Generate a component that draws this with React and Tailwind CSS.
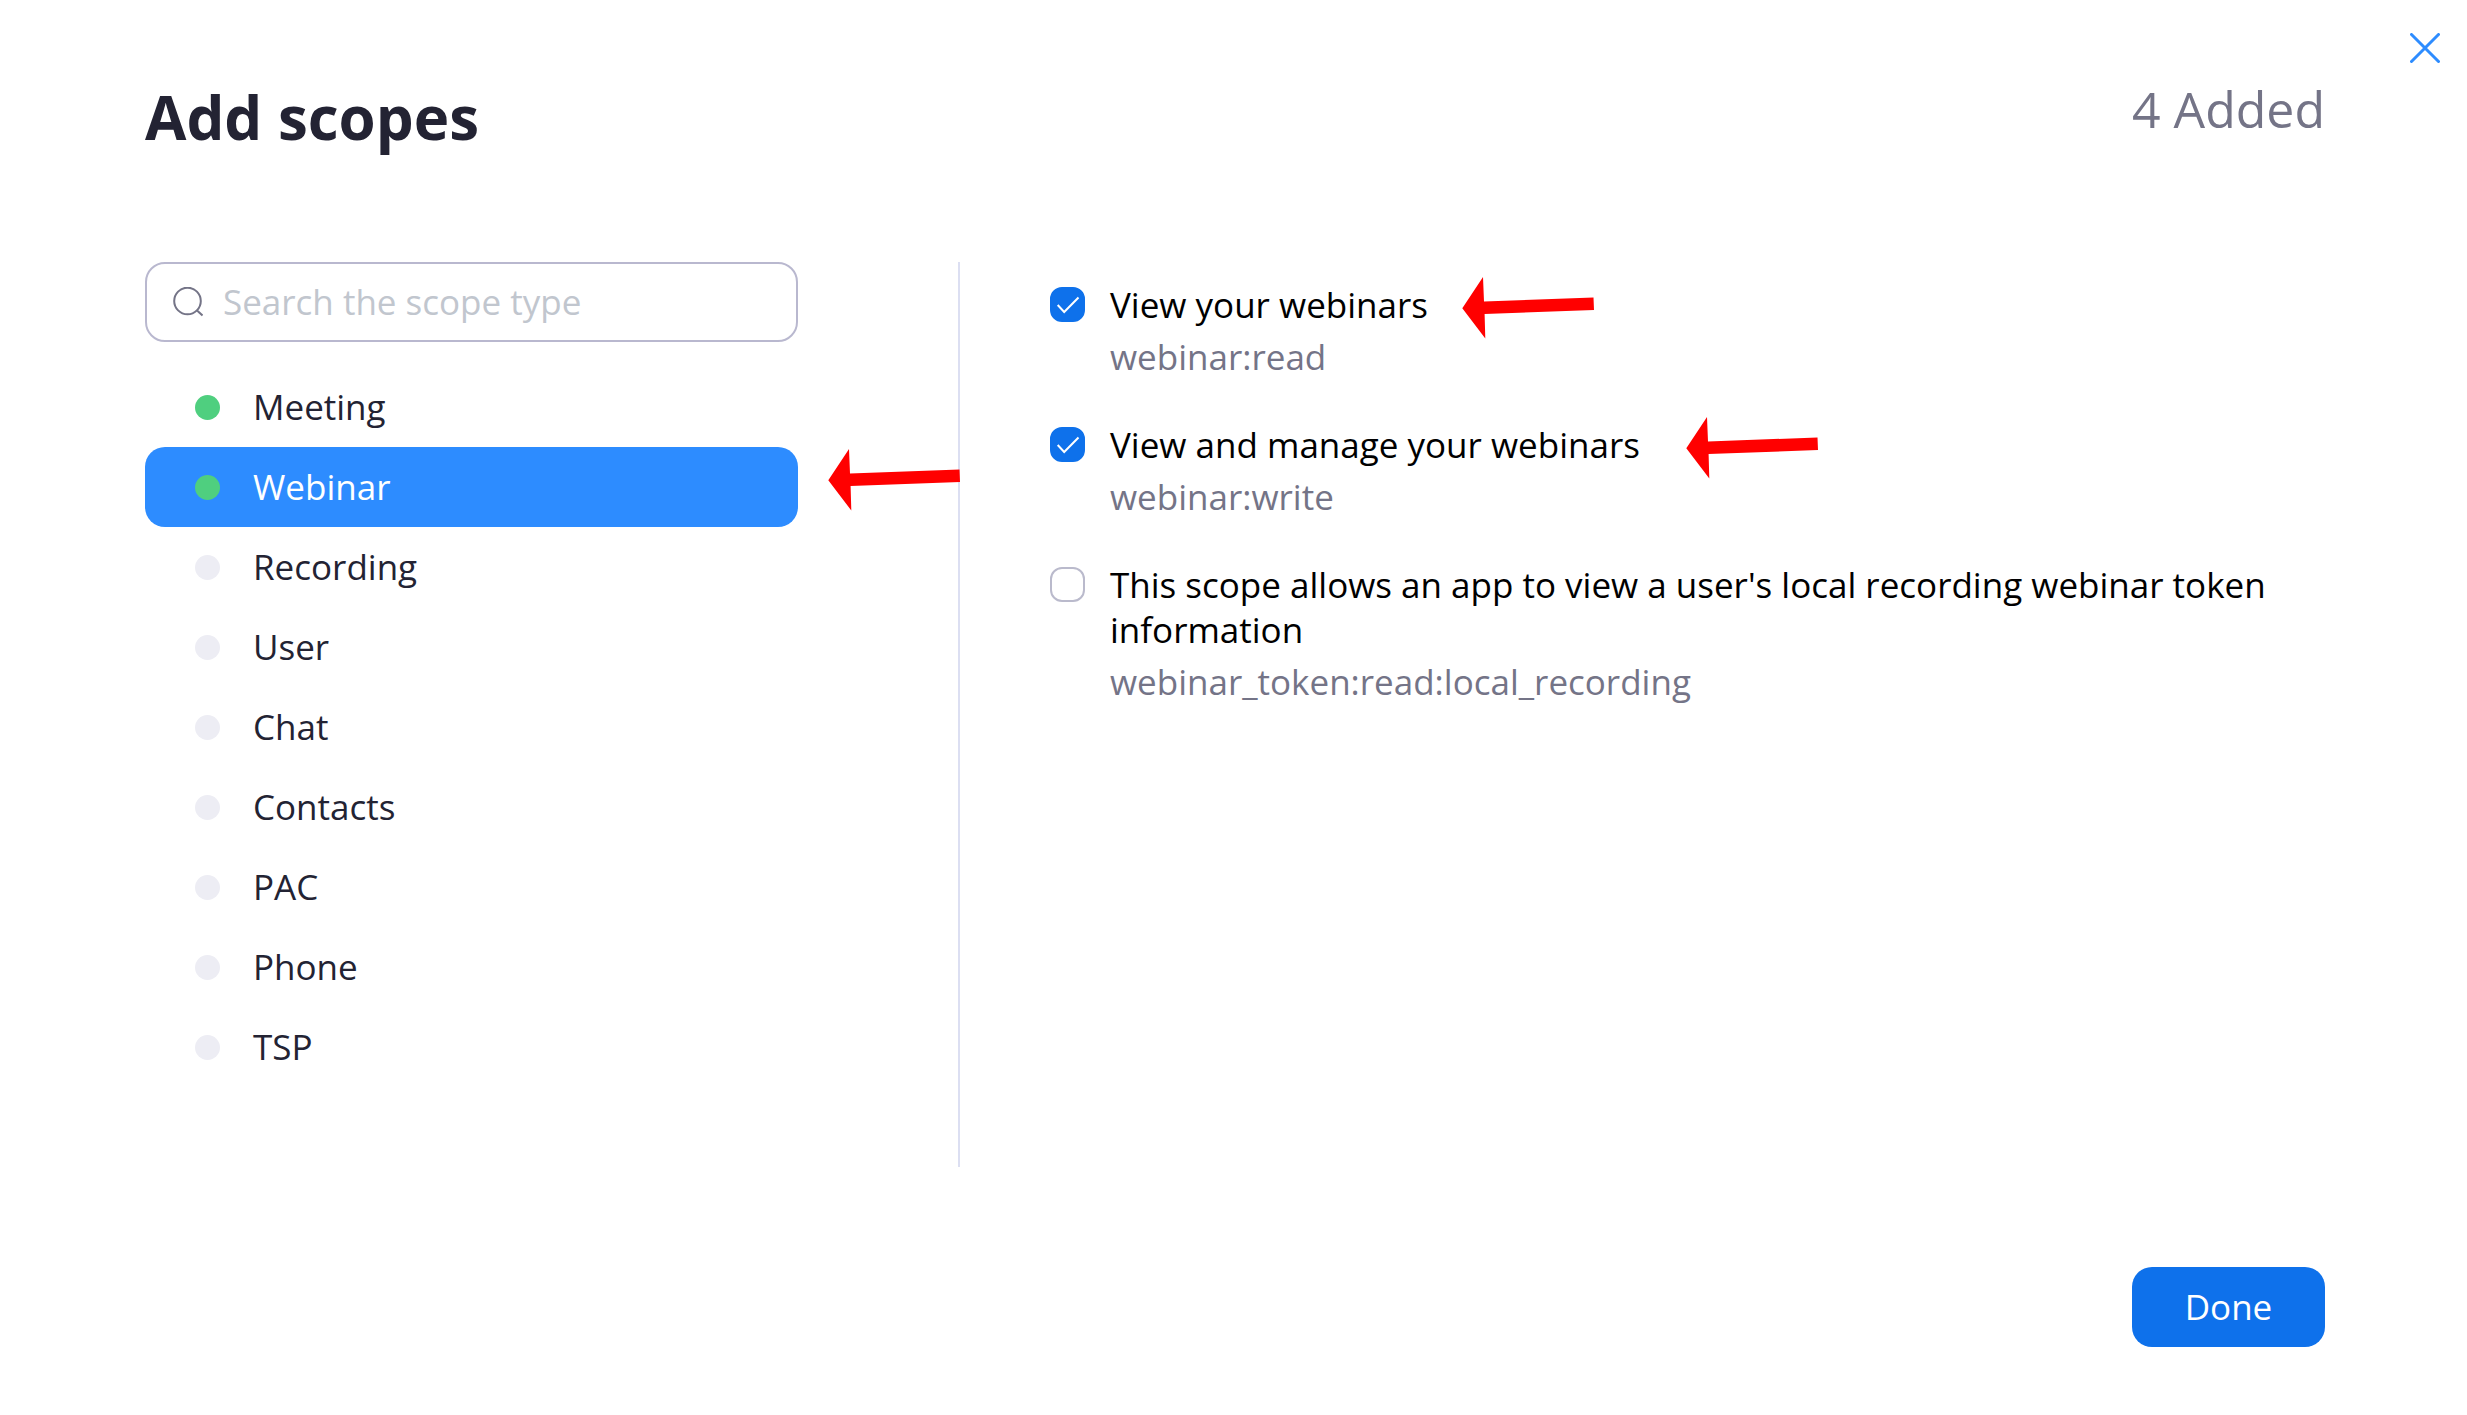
import React, { useState } from "react";

const SCOPE_TYPES = [
  { name: "Meeting", added: true },
  { name: "Webinar", added: true, marked: true },
  { name: "Recording" },
  { name: "User" },
  { name: "Chat" },
  { name: "Contacts" },
  { name: "PAC" },
  { name: "Phone" },
  { name: "TSP" },
];

const WEBINAR_SCOPES = [
  { id: "webinar:read", label: "View your webinars", arrow: "ml-[34px]" },
  { id: "webinar:write", label: "View and manage your webinars", arrow: "ml-[46px]" },
  {
    id: "webinar_token:read:local_recording",
    label: "This scope allows an app to view a user's local recording webinar token information",
  },
];

// Scopes already added under the other types
const OTHER_ADDED = 2;

function Arrow({ className }) {
  return (
    <svg
      viewBox="0 0 132 62"
      fill="#ff0000"
      aria-hidden="true"
      className={`pointer-events-none absolute left-full h-[62px] w-[132px] max-w-none ${className}`}
    >
      <polygon points="0.3,31.3 21,0 22,24.5 131.5,20.5 132,33 22.6,37 23.3,61.5" />
    </svg>
  );
}

function ScopeTypeRow({ type, active, onSelect }) {
  return (
    <li className="relative">
      <button
        type="button"
        onClick={onSelect}
        className={`flex h-20 w-full items-center gap-[33px] rounded-[20px] pl-[50px] text-left
          ${active ? "bg-[#2d8cff] text-white" : "text-[#232333]"}`}
      >
        <span className={`size-[25px] rounded-full ${type.added ? "bg-[#4fcf7f]" : "bg-[#ededf4]"}`} />
        {type.name}
      </button>
      {type.marked && <Arrow className="top-0.5 ml-[30px]" />}
    </li>
  );
}

function ScopeOption({ scope, checked, onToggle }) {
  return (
    <div className="flex items-start gap-[25px]">
      <span className="mt-[5px] grid shrink-0">
        <input
          id={scope.id}
          type="checkbox"
          checked={checked}
          onChange={onToggle}
          className="col-start-1 row-start-1 size-[35px] appearance-none rounded-xl border-2 border-[#babacc] bg-white checked:border-[#0e71eb] checked:bg-[#0e71eb]"
        />
        {checked && (
          <svg
            viewBox="0 0 35 35"
            fill="none"
            stroke="white"
            strokeWidth="2"
            aria-hidden="true"
            className="pointer-events-none col-start-1 row-start-1 size-[35px]"
          >
            <path d="M7.7 18l6.5 7L28.5 10.5" />
          </svg>
        )}
      </span>

      <div className="flex min-w-0 flex-col items-start gap-[7px] leading-[45px]">
        <label htmlFor={scope.id} className="relative text-black">
          {scope.label}
          {scope.arrow && <Arrow className={`-top-[5px] ${scope.arrow}`} />}
        </label>
        <p className="text-[#747487]">{scope.id}</p>
      </div>
    </div>
  );
}

export default function App() {
  const [active, setActive] = useState("Webinar");
  const [query, setQuery] = useState("");
  const [checked, setChecked] = useState(["webinar:read", "webinar:write"]);

  const toggle = (id) =>
    setChecked((prev) => (prev.includes(id) ? prev.filter((s) => s !== id) : [...prev, id]));

  const types = SCOPE_TYPES.filter((t) => t.name.toLowerCase().includes(query.toLowerCase()));

  return (
    <div className="min-h-screen bg-white pb-[68px] font-['Open_Sans',sans-serif] text-[35px]">
      <div className="flex justify-end pt-[33px] pr-[27px]">
        <button type="button" aria-label="Close" className="size-[30px]">
          <svg viewBox="0 0 30 30" fill="none" stroke="#2d8cff" strokeWidth="3" strokeLinecap="round">
            <path d="M1.5 1.5l27 27M28.5 1.5l-27 27" />
          </svg>
        </button>
      </div>

      <div className="pr-[142px] pl-[145px]">
        <header className="flex items-start justify-between pt-3">
          <h1 className="text-[60px] leading-[84px] font-bold text-[#232333]">Add scopes</h1>
          <p className="text-[50px] leading-[68px] text-[#747487]">{OTHER_ADDED + checked.length} Added</p>
        </header>

        <main className="mt-[103px] flex min-h-[905px]">
          {/* Scope types */}
          <section className="w-[815px] shrink-0 border-r-2 border-[#dcdff2] pr-40">
            <div className="flex h-20 items-center gap-5 rounded-[20px] border-2 border-[#b9b8cf] px-[26px]">
              <svg
                viewBox="0 0 30 30"
                fill="none"
                stroke="#747487"
                strokeWidth="2"
                aria-hidden="true"
                className="size-[30px] shrink-0"
              >
                <circle cx="14.5" cy="14" r="13.3" />
                <path d="M23.5 23l6 5.5" />
              </svg>
              <input
                type="text"
                aria-label="Search the scope type"
                placeholder="Search the scope type"
                value={query}
                onChange={(e) => setQuery(e.target.value)}
                className="min-w-0 flex-1 text-[#232333] outline-none placeholder:text-[#c1c6ce]"
              />
            </div>

            <ul className="mt-[25px]">
              {types.map((type) => (
                <ScopeTypeRow
                  key={type.name}
                  type={type}
                  active={type.name === active}
                  onSelect={() => setActive(type.name)}
                />
              ))}
            </ul>
          </section>

          {/* Scopes of the selected type */}
          <section className="flex min-w-0 flex-1 flex-col gap-[43px] pt-5 pl-[90px]">
            {WEBINAR_SCOPES.map((scope) => (
              <ScopeOption
                key={scope.id}
                scope={scope}
                checked={checked.includes(scope.id)}
                onToggle={() => toggle(scope.id)}
              />
            ))}
          </section>
        </main>

        <footer className="mt-[100px] flex justify-end">
          <button type="button" className="h-20 w-[193px] rounded-[20px] bg-[#0e71eb] text-white">
            Done
          </button>
        </footer>
      </div>
    </div>
  );
}
